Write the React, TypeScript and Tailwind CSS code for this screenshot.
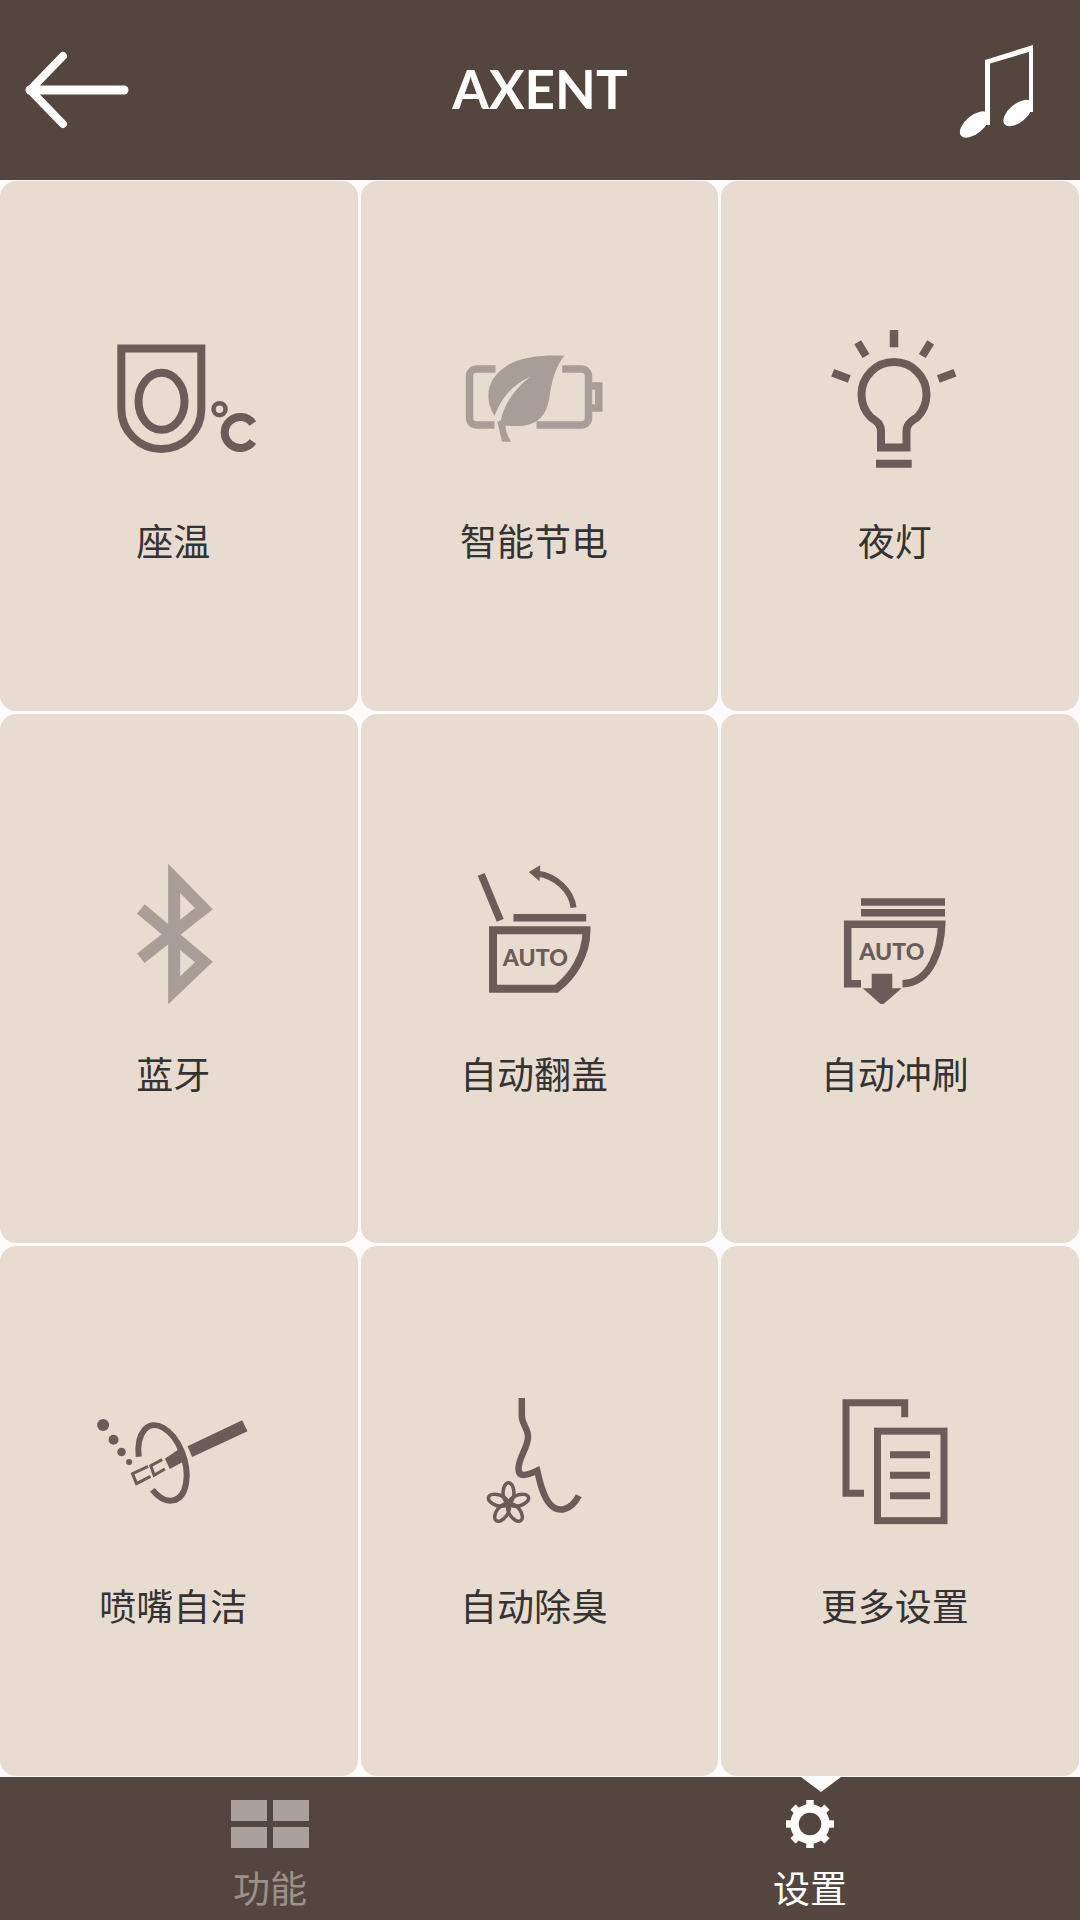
import React from 'react';

const DARK = '#6a5c58';
const LIGHT = '#a99e97';
const CELL = '#e8dcd0';

const SeatTemp = () => (
  <g stroke={DARK} fill="none">
    <path d="M121.5 348.5H201.5V409A40 40 0 0 1 121.5 409Z" strokeWidth="8" />
    <ellipse cx="161.7" cy="401.3" rx="23" ry="28.5" strokeWidth="8" />
    <circle cx="219.7" cy="409.2" r="6" strokeWidth="4.5" />
    <path d="M253 423.5A15.5 15.5 0 1 0 253 441.5" strokeWidth="8" />
  </g>
);

const PowerSave = () => (
  <g>
    <g stroke={LIGHT} strokeWidth="7.5" fill="none">
      <path d="M496 369H477A7 7 0 0 0 470 376V418A7 7 0 0 0 477 425H495" />
      <path d="M562.7 369H582A7 7 0 0 1 589 376V418A7 7 0 0 1 582 425H537" />
      <path d="M592 386H599.3V408H592" />
    </g>
    <path
      d="M565 355.7C545 355 522 356 507 366C494 374 488 386 489 398C489.5 406 492 412 497 418L502.5 441.7H511.7C508 436 506 431 506 425.5C514 426 522 427 531 424C543 420 548 410 550 397C552 382 556 366 565 355.7Z"
      fill={LIGHT}
    />
    <path d="M531 376.5C515 384 502 396 495 416.5L498.5 422L501.5 420C504 405 516 388 531 376.5Z" fill={CELL} />
  </g>
);

const NightLight = () => (
  <g stroke={DARK} fill="none">
    <path d="M894 330V347.3" strokeWidth="8.5" />
    <path d="M857.7 342.3L866 356M930.7 342.3L922.3 356M832.7 372.7L849.3 379M955 372.7L938.3 379" strokeWidth="8" />
    <path
      d="M881 447.5V432C881 423 876 421 871 417.5A32.5 32.5 0 1 1 917 417.5C912 421 906.5 423 906.5 432V447.5Z"
      strokeWidth="8"
    />
    <path d="M876 463.7H911.7" strokeWidth="8" />
  </g>
);

const Bluetooth = () => (
  <path
    d="M141 958L204 908.3L174.3 878V990L204 961.7L141 908.5"
    stroke={LIGHT}
    strokeWidth="12"
    fill="none"
  />
);

const AutoLid = () => (
  <g>
    <g stroke={DARK} fill="none">
      <path d="M481.7 874L500.7 920" strokeWidth="7.5" />
      <path d="M514 917.3H586.7" strokeWidth="7.5" />
      <path d="M574 907.3C572 890 556 876 539 873.5" strokeWidth="6" />
      <path d="M493.5 930H587C587 955 573 976 557 988.3H493.5Z" strokeWidth="8" />
    </g>
    <path d="M529.3 871.7L540.7 865L540 881Z" fill={DARK} />
    <text x="503.3" y="965.5" textLength="65" className="font-['Lato'] text-[23px] font-black" fill={DARK}>
      AUTO
    </text>
  </g>
);

const AutoFlush = () => (
  <g>
    <g stroke={DARK} fill="none" strokeWidth="7.5">
      <path d="M861 901.7H945M861 912.4H945" />
      <path d="M861 983.3H847.7V924H941.7C941 946 932 983 902.5 983.3" />
    </g>
    <path d="M871.7 973.3H892.3V988H901.7L882 1005L862.7 988H871.7Z" fill={DARK} />
    <text x="859.3" y="959.3" textLength="65" className="font-['Lato'] text-[23px] font-black" fill={DARK}>
      AUTO
    </text>
  </g>
);

const NozzleClean = () => (
  <g>
    <g fill={DARK}>
      <circle cx="103.3" cy="1425.3" r="6" />
      <circle cx="113.7" cy="1440" r="5" />
      <circle cx="121.7" cy="1452.3" r="4.3" />
      <circle cx="129.3" cy="1462.3" r="3" />
      <path d="M187.7 1446.7L242.3 1420.7L247.7 1431.7L192.3 1457.3Z" />
      <path d="M165 1459L178.3 1450L184.3 1461.7L170 1469.3Z" />
    </g>
    <path
      transform="translate(162.7 1463.3) rotate(-18)"
      d="M-20.7 -13.3A22 39 0 1 1 -18 22.4"
      stroke={DARK}
      strokeWidth="6"
      fill="none"
    />
    <g stroke={DARK} strokeWidth="3" fill="none">
      <path d="M162.3 1460L151 1466L154.3 1475.7L165 1469.3" />
      <path d="M148.3 1466.7L132.7 1474L136.7 1484L150.7 1476.7" />
    </g>
  </g>
);

const Deodorize = () => (
  <g stroke={DARK} fill="none">
    <path
      d="M522.3 1398.3V1416C522.3 1425 528.5 1428 528.5 1437C528.5 1448 519 1458 519 1469C519 1478 527 1476 537.7 1471C540 1480 543 1497 551 1505C559 1514 572 1510 579.3 1496"
      strokeWidth="6.5"
    />
    <g transform="translate(509 1504)" strokeWidth="3.5">
      {[0, 72, 144, 216, 288].map((a) => (
        <ellipse key={a} cx="0" cy="-11" rx="5.5" ry="10" transform={`rotate(${a})`} />
      ))}
    </g>
  </g>
);

const MoreSettings = () => (
  <g stroke={DARK} fill="none" strokeWidth="7">
    <path d="M904.7 1417.7V1403H846V1493.5H864" />
    <rect x="877.5" y="1431.5" width="66.5" height="89.5" />
    <path d="M890 1455H930M890 1475.5H930M890 1496H930" />
  </g>
);

const items = [
  { label: '座温', view: '79.17 311', icon: <SeatTemp /> },
  { label: '智能节电', view: '439.5 311', icon: <PowerSave /> },
  { label: '夜灯', view: '800 311', icon: <NightLight /> },
  { label: '蓝牙', view: '79.17 843.67', icon: <Bluetooth /> },
  { label: '自动翻盖', view: '439.5 843.67', icon: <AutoLid /> },
  { label: '自动冲刷', view: '800 843.67', icon: <AutoFlush /> },
  { label: '喷嘴自洁', view: '79.17 1376.33', icon: <NozzleClean /> },
  { label: '自动除臭', view: '439.5 1376.33', icon: <Deodorize /> },
  { label: '更多设置', view: '800 1376.33', icon: <MoreSettings /> },
];

const GearIcon = () => (
  <svg width="50" height="48" viewBox="-25 -24 50 48" fill="#ffffff">
    <circle r="15.5" fill="none" stroke="#ffffff" strokeWidth="8.5" />
    {[0, 45, 90, 135, 180, 225, 270, 315].map((a) => (
      <rect key={a} x="-3.7" y="-24" width="7.4" height="8" transform={`rotate(${a})`} />
    ))}
  </svg>
);

const App: React.FC = () => {
  return (
    <div className="flex h-[1920px] w-[1080px] flex-col overflow-hidden bg-[#fdfbfb] font-['Noto_Sans_CJK_SC',sans-serif]">
      <header className="grid h-[180px] grid-cols-[1fr_auto_1fr] items-center bg-[#54463f]">
        <div className="pl-[20px]">
          <svg width="120" height="100" viewBox="20 40 120 100" fill="none" stroke="#ffffff" strokeLinecap="round" strokeLinejoin="round">
            <path d="M30 90H124" strokeWidth="9" />
            <path d="M63 56L30 90L63 124" strokeWidth="8" />
          </svg>
        </div>
        <span className="pb-[3px] font-['Lato',sans-serif] text-[53px] font-bold leading-none text-white">AXENT</span>
        <div className="justify-self-end pr-[40px]">
          <svg width="90" height="100" viewBox="950 40 90 100" fill="#ffffff">
            <path d="M985 60L1033 45V112H1029V52L990 63.5V125H985Z" />
            <ellipse cx="974.5" cy="124.5" rx="17.5" ry="9" transform="rotate(-40 974.5 124.5)" />
            <ellipse cx="1018" cy="113" rx="17.5" ry="9" transform="rotate(-40 1018 113)" />
          </svg>
        </div>
      </header>

      <main className="grid flex-1 grid-cols-3 grid-rows-3 gap-[3px] p-[1px] pl-0">
        {items.map((item) => (
          <div key={item.label} className="flex flex-col items-center rounded-[16px] bg-[#e8dcd0] pt-[130px]">
            <svg width="200" height="160" viewBox={`${item.view} 200 160`}>
              {item.icon}
            </svg>
            <span className="mr-[11px] mt-[45px] text-[37px] leading-[48px] text-[#333333]">{item.label}</span>
          </div>
        ))}
      </main>

      <footer className="relative grid h-[143px] grid-cols-2 bg-[#54463f]">
        <div className="absolute left-[801px] top-0 h-0 w-0 border-x-[20px] border-t-[15px] border-x-transparent border-t-[#fdfbfb]" />
        <div className="flex flex-col items-center pt-[23px]">
          <svg width="78" height="48" viewBox="0 0 78 48" fill="#aba19c">
            <rect x="0" y="0" width="36" height="21" />
            <rect x="42" y="0" width="36" height="21" />
            <rect x="0" y="27" width="36" height="21" />
            <rect x="42" y="27" width="36" height="21" />
          </svg>
          <span className="mt-[15px] text-[37px] leading-[48px] text-[#9c908a]">功能</span>
        </div>
        <div className="flex flex-col items-center pt-[23px]">
          <GearIcon />
          <span className="mt-[15px] text-[37px] leading-[48px] text-white">设置</span>
        </div>
      </footer>
    </div>
  );
};

export default App;
